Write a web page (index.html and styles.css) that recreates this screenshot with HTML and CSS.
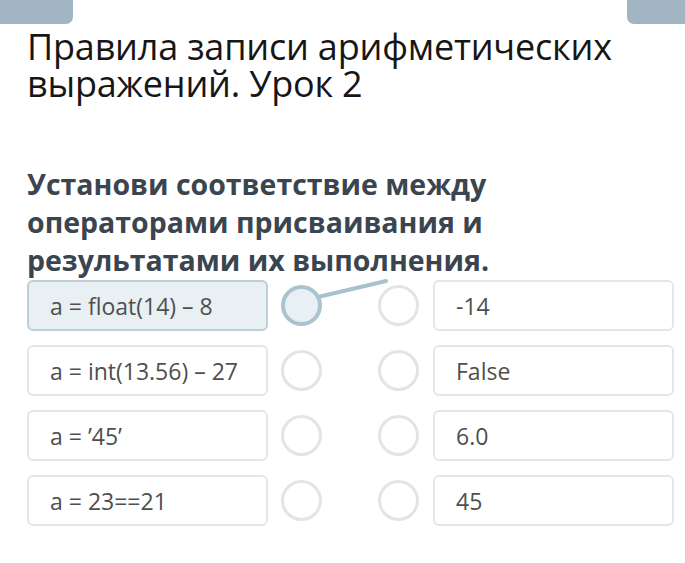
FILE: index.html
```html
<!DOCTYPE html>
<html lang="ru">
<head>
    <meta charset="UTF-8">
    <meta name="viewport" content="width=device-width, initial-scale=1.0">
    <title>Правила записи арифметических выражений. Урок 2</title>
    <link rel="stylesheet" href="styles.css">
</head>
<body>
    <div class="top-bar">
        <div class="tab tab-left"></div>
        <div class="tab tab-right"></div>
    </div>

    <h1 class="lesson-title">Правила записи арифметических выражений. Урок 2</h1>

    <h2 class="question">Установи соответствие между операторами присваивания и результатами их выполнения.</h2>

    <div class="match">
        <!-- connection line from the selected left item -->
        <svg class="link" width="685" height="563" viewBox="0 0 685 563">
            <line x1="318" y1="298" x2="386" y2="282" stroke="#a7c2cd" stroke-width="4" stroke-linecap="round"/>
        </svg>

        <div class="row">
            <div class="item selected">a = float(14) – 8</div>
            <span class="dot selected"></span>
            <span class="dot"></span>
            <div class="item">-14</div>
        </div>
        <div class="row">
            <div class="item">a = int(13.56) – 27</div>
            <span class="dot"></span>
            <span class="dot"></span>
            <div class="item">False</div>
        </div>
        <div class="row">
            <div class="item">a = ’45’</div>
            <span class="dot"></span>
            <span class="dot"></span>
            <div class="item">6.0</div>
        </div>
        <div class="row">
            <div class="item">a = 23==21</div>
            <span class="dot"></span>
            <span class="dot"></span>
            <div class="item">45</div>
        </div>
    </div>
</body>
</html>
```

FILE: styles.css
```css
* {
    box-sizing: border-box;
    margin: 0;
    padding: 0;
}

body {
    font-family: 'Open Sans', 'Noto Sans', sans-serif;
    background: #ffffff;
    color: #1b1b1b;
    width: 685px;
    height: 563px;
    overflow: hidden;
}

.top-bar {
    display: flex;
    justify-content: space-between;
    height: 24px;
}

.tab {
    background: #a2b5c2;
    height: 24px;
}

.tab-left {
    width: 73px;
    border-bottom-right-radius: 7px;
}

.tab-right {
    width: 58px;
    border-bottom-left-radius: 7px;
}

.lesson-title {
    font-weight: 400;
    font-size: 36px;
    line-height: 37px;
    letter-spacing: -0.2px;
    color: #161616;
    padding: 4px 0 0 27px;
}

.question {
    font-weight: 700;
    font-size: 28.5px;
    line-height: 38px;
    color: #3a4550;
    padding: 63px 0 0 27px;
    width: 540px;
}

.match {
    position: relative;
    display: flex;
    flex-direction: column;
    gap: 14px;
    padding: 1px 0 0 27px;
}

.link {
    position: absolute;
    left: 0;
    top: 0;
    pointer-events: none;
    z-index: 2;
    /* .match top is at 280px of the page */
    margin-top: -280px;
}

.row {
    display: flex;
    align-items: center;
    height: 51px;
}

.item {
    display: flex;
    align-items: center;
    width: 241px;
    height: 51px;
    padding-left: 21px;
    border: 2px solid #e4e6e7;
    border-radius: 6px;
    background: #ffffff;
    font-size: 23px;
    color: #4f4f4f;
}

.item.selected {
    background: #e8f0f4;
    border-color: #bcd0d9;
}

.dot {
    width: 41px;
    height: 41px;
    border: 3px solid #e2e4e5;
    border-radius: 50%;
    background: #ffffff;
    margin-left: 13px;
    position: relative;
    z-index: 3;
}

.dot + .dot {
    margin-left: 56px;
    margin-right: 14px;
}

.dot.selected {
    border: 4px solid #a9c4cf;
    background: #e8f0f4;
}
```
